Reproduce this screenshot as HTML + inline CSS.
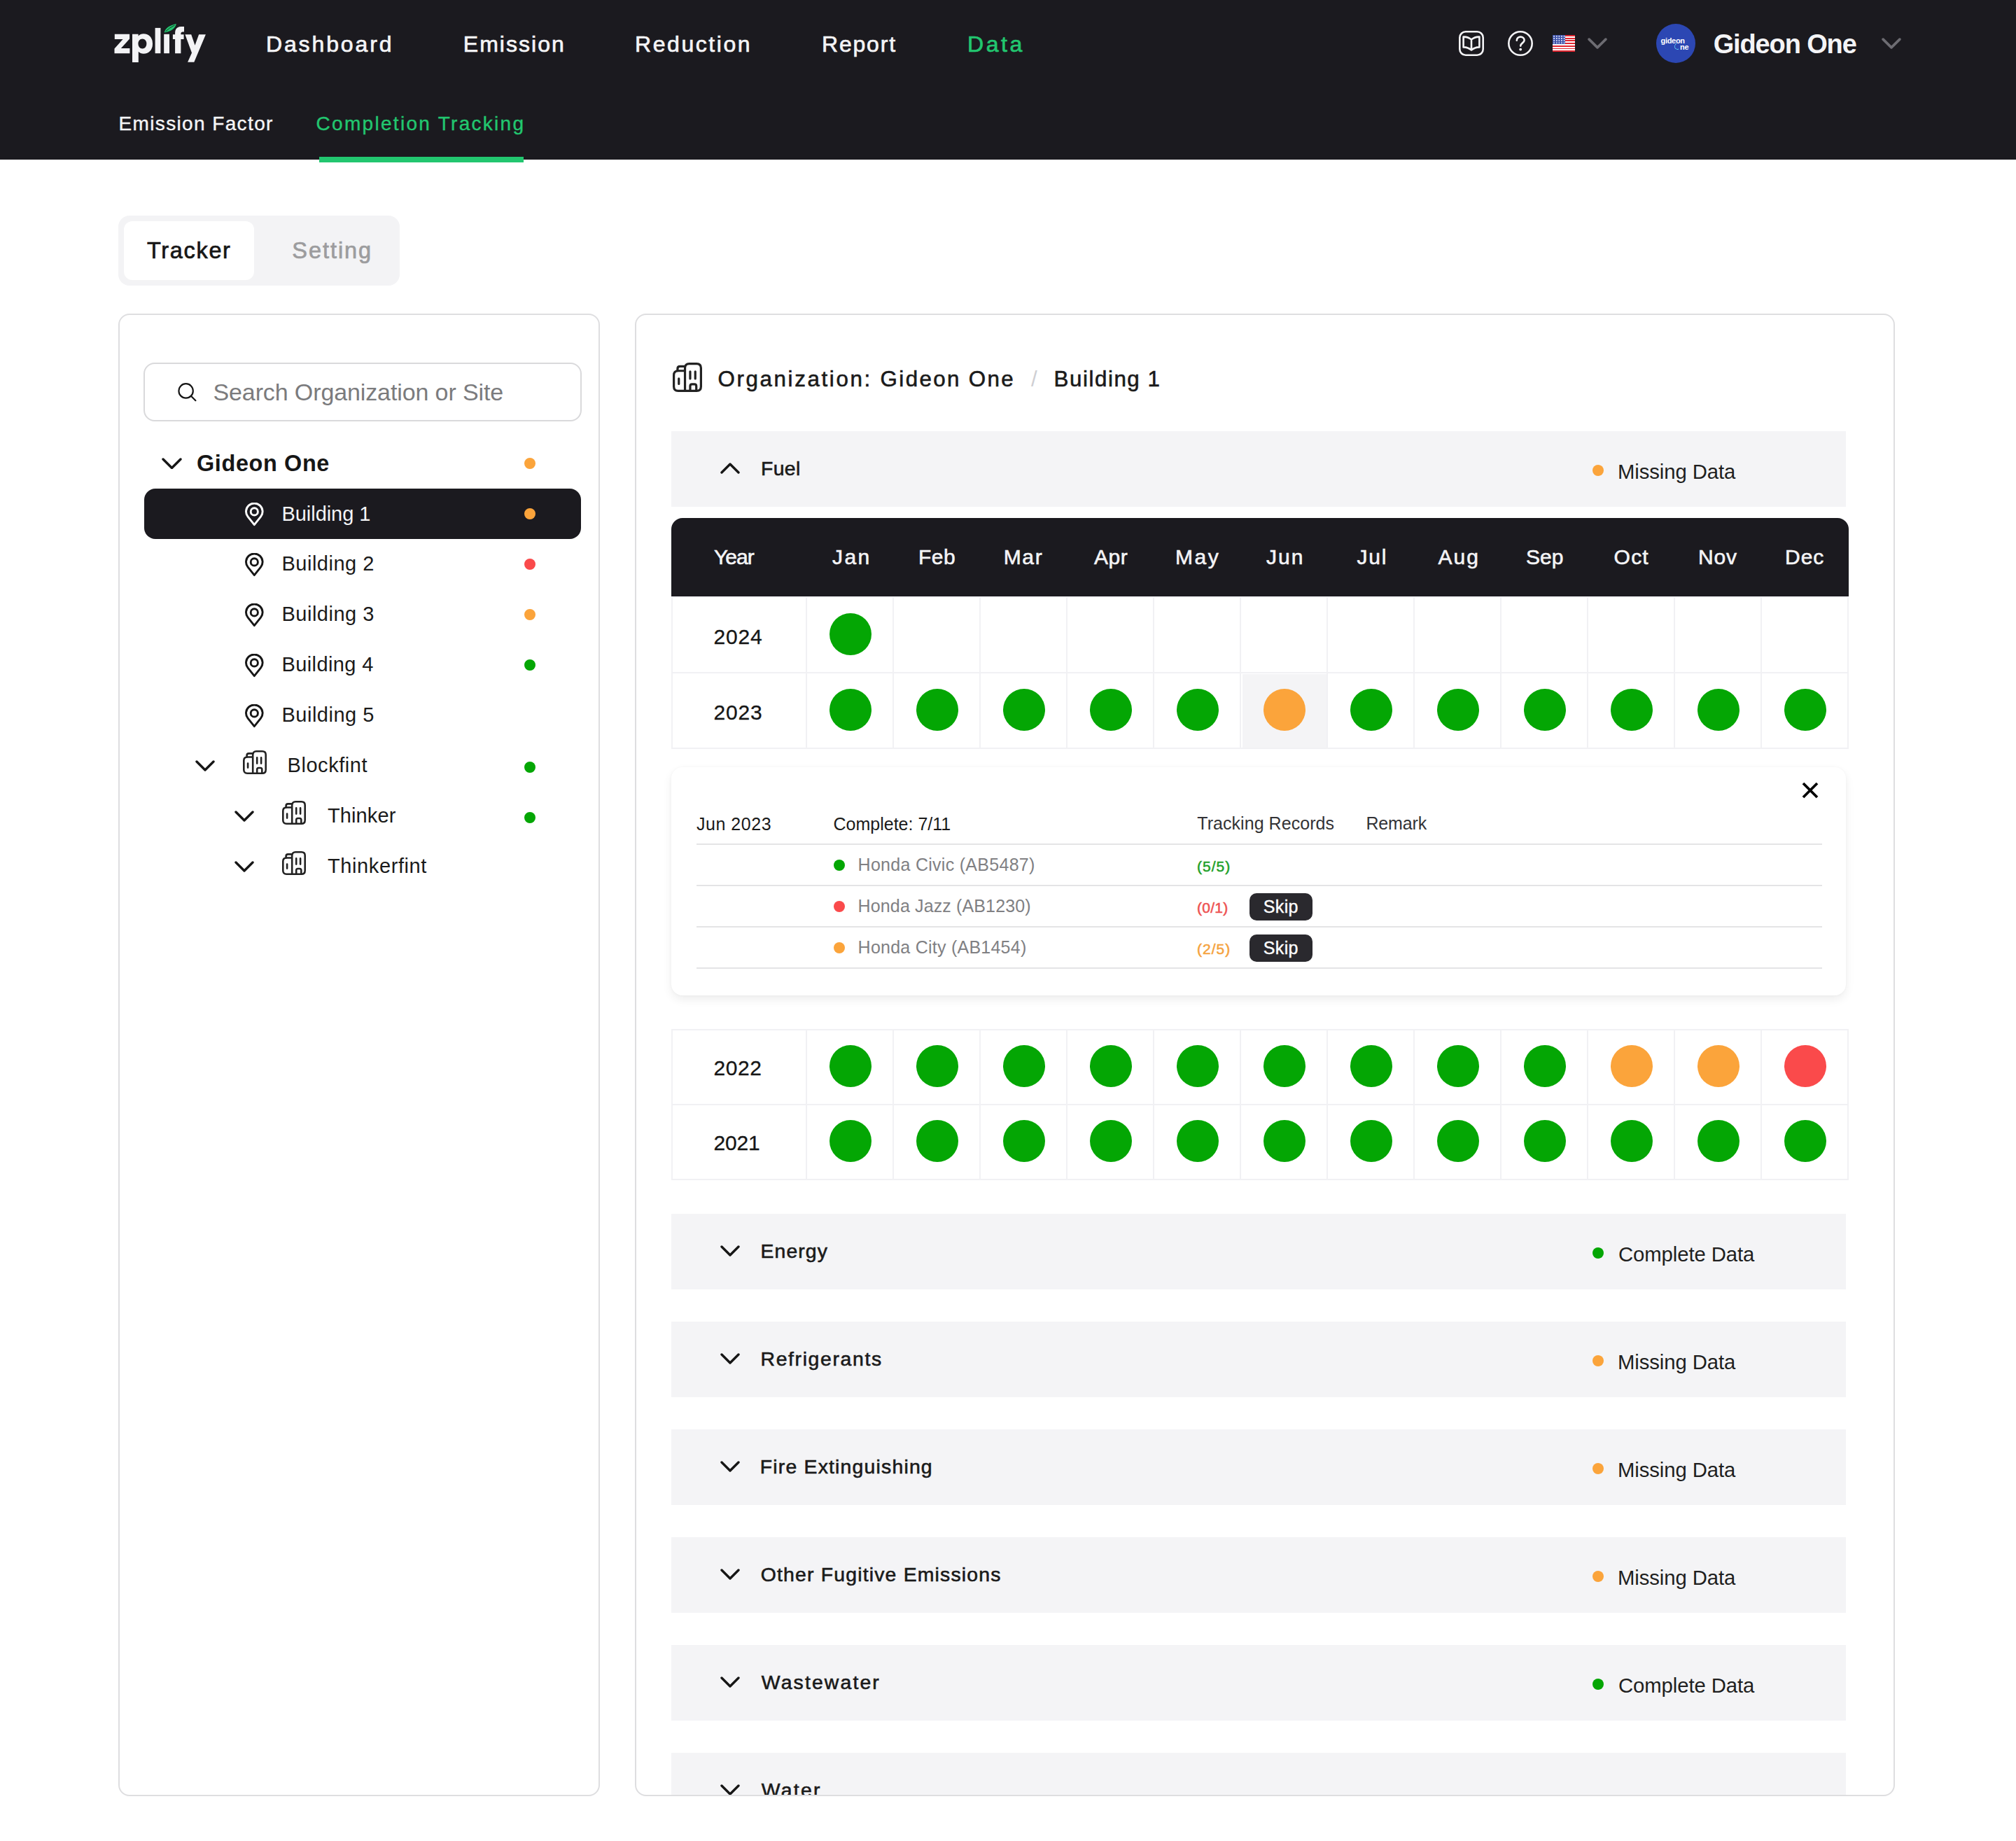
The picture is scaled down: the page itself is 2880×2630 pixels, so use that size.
<!DOCTYPE html><html><head><meta charset="utf-8"><title>zplify</title><style>
html,body{margin:0;padding:0;}body{width:2880px;height:2630px;position:relative;overflow:hidden;background:#ffffff;font-family:"Liberation Sans",sans-serif;}
.a{position:absolute;box-sizing:border-box;}.t{position:absolute;white-space:nowrap;line-height:1;font-family:"Liberation Sans",sans-serif;}
</style></head><body>
<div class="a" style="left:0px;top:0px;width:2880px;height:228px;background:#1b1a1f;border-radius:0px;"></div>
<svg class="a" style="left:160px;top:30px;" width="140" height="62" viewBox="0 0 140 62" fill="none"><g transform="translate(-160,-30)" fill="#f3f3f5"><path d="M163.8 48.8H185.1V55.6L172.9 69H185.4V76.2H163.5V69.5L175.6 56H163.8Z"/><path d="M189 48.8H197.6V51.5Q200.5 48.2 205 48.2Q211 48.2 214.6 52.2Q218 56.2 218 62.4Q218 68.8 214.5 72.8Q211 76.8 205 76.8Q200.6 76.8 197.8 73.8V89H189ZM203.4 55.6Q200.6 55.6 199 57.6Q197.4 59.6 197.4 62.5Q197.4 65.5 199 67.5Q200.6 69.5 203.4 69.5Q206.2 69.5 207.8 67.5Q209.4 65.5 209.4 62.5Q209.4 59.6 207.8 57.6Q206.2 55.6 203.4 55.6Z"/><rect x="221.6" y="39.9" width="7.8" height="36.3"/><rect x="234.2" y="48.8" width="7.8" height="27.4"/><path d="M250.1 76.2V56.1H246.9V49.2H250.1V47Q250.1 38.1 259 38.1H263V45.4H261Q258.4 45.4 258.4 48.2V49.2H262.6V56.1H258.4V76.2Z"/><path d="M264.4 49.2H273.2L278.5 64.8L284.1 49.2H293.9L277.3 88.8H268.1L274 75.6Z"/></g><g transform="translate(-160,-30)"><path d="M234.8 46.6Q236 37.5 251.8 33.9Q250 43.5 234.8 46.6Z" fill="#22c66f"/><path d="M236.5 45Q242 39.5 249.5 36" stroke="#1b1a1f" stroke-width="0.9" fill="none"/></g></svg>
<div class="t" style="left:379.9px;top:46.8px;font-size:32px;letter-spacing:2.888px;color:#f4f4f6;-webkit-text-stroke:0.7px #f4f4f6;">Dashboard</div>
<div class="t" style="left:661.8px;top:46.8px;font-size:32px;letter-spacing:2.029px;color:#f4f4f6;-webkit-text-stroke:0.7px #f4f4f6;">Emission</div>
<div class="t" style="left:907px;top:46.8px;font-size:32px;letter-spacing:2.562px;color:#f4f4f6;-webkit-text-stroke:0.7px #f4f4f6;">Reduction</div>
<div class="t" style="left:1174px;top:46.8px;font-size:32px;letter-spacing:1.8px;color:#f4f4f6;-webkit-text-stroke:0.7px #f4f4f6;">Report</div>
<div class="t" style="left:1382px;top:46.8px;font-size:32px;letter-spacing:3.567px;color:#22c66f;-webkit-text-stroke:0.7px #22c66f;">Data</div>
<svg class="a" style="left:2080px;top:40px;" width="44" height="44" viewBox="0 0 44 44" fill="none"><g transform="translate(-2080,-40)" stroke="#f4f4f6" stroke-width="2.6" fill="none" stroke-linejoin="round"><rect x="2085.3" y="45.3" width="33.4" height="33.4" rx="8.5"/><path d="M2102 56.5C2098.5 53.6 2094.5 52.4 2090.6 52.6V67.4C2094.5 67.3 2098.5 68.6 2102 71.6C2105.5 68.6 2109.5 67.3 2113.4 67.4V52.6C2109.5 52.4 2105.5 53.6 2102 56.5ZM2102 56.5V71.6"/></g></svg>
<svg class="a" style="left:2150px;top:40px;" width="44" height="44" viewBox="0 0 44 44" fill="none"><g transform="translate(-2150,-40)"><circle cx="2172" cy="62" r="16.7" stroke="#f4f4f6" stroke-width="2.6" fill="none"/><path d="M2166.8 57.8C2166.8 54.6 2169.2 52.6 2172.2 52.6C2175.2 52.6 2177.6 54.6 2177.6 57.5C2177.6 61.2 2172.2 61.6 2172.2 65.6" stroke="#f4f4f6" stroke-width="2.6" fill="none" stroke-linecap="round"/><circle cx="2172.2" cy="70.6" r="1.9" fill="#f4f4f6"/></g></svg>
<div class="a" style="left:2218px;top:50px;width:32px;height:24px;background:repeating-linear-gradient(180deg,#e0262f 0px,#e0262f 1.85px,#ffffff 1.85px,#ffffff 3.7px);"></div>
<div class="a" style="left:2218px;top:50px;width:18px;height:13px;background:#3a4fa6;"></div>
<div class="a" style="left:2218px;top:50px;width:18px;height:13px;background-image:radial-gradient(circle,#e8ecff 0.9px,transparent 1.1px);background-size:3.6px 3.2px;background-position:0.4px 0.2px;"></div>
<svg class="a" style="left:2268px;top:54px;" width="28" height="16" viewBox="0 0 28 16" fill="none"><polyline points="2.1,2.1 14.0,13.9 25.9,2.1" stroke="#6d6c72" stroke-width="3.6" stroke-linecap="round" stroke-linejoin="round"/></svg>
<div class="a" style="left:2366.0px;top:34.0px;width:56px;height:56px;background:#2c47b3;border-radius:28.0px;"></div>
<div class="t" style="left:2372.5px;top:53px;font-size:11px;font-weight:700;color:#fff;letter-spacing:-0.3px;">gideon</div>
<div class="t" style="left:2400px;top:61.5px;font-size:11px;font-weight:700;color:#fff;letter-spacing:-0.3px;">ne</div>
<div class="a" style="left:2392px;top:60.5px;width:9px;height:10px;border:1.7px solid #58c4ef;border-radius:50%;border-top-color:transparent;border-right-color:transparent;transform:rotate(20deg);"></div>
<div class="t" style="left:2447.7px;top:43.7px;font-size:38px;letter-spacing:-1.133px;color:#f4f4f6;font-weight:700;">Gideon One</div>
<svg class="a" style="left:2688px;top:54px;" width="28" height="16" viewBox="0 0 28 16" fill="none"><polyline points="2.1,2.1 14.0,13.9 25.9,2.1" stroke="#6d6c72" stroke-width="3.6" stroke-linecap="round" stroke-linejoin="round"/></svg>
<div class="t" style="left:169.4px;top:162.5px;font-size:28px;letter-spacing:1.379px;color:#f4f4f6;-webkit-text-stroke:0.4px #f4f4f6;">Emission Factor</div>
<div class="t" style="left:451.6px;top:162.5px;font-size:28px;letter-spacing:2.289px;color:#22c66f;-webkit-text-stroke:0.4px #22c66f;">Completion Tracking</div>
<div class="a" style="left:456px;top:224px;width:292px;height:8px;background:#22c66f;border-radius:0px;"></div>
<div class="a" style="left:169px;top:308px;width:402px;height:100px;background:#f3f3f5;border-radius:16px;"></div>
<div class="a" style="left:177px;top:316px;width:186px;height:84px;background:#ffffff;border-radius:12px;"></div>
<div class="t" style="left:210px;top:342.38px;font-size:32.5px;letter-spacing:1.667px;color:#161616;-webkit-text-stroke:0.7px #161616;">Tracker</div>
<div class="t" style="left:417.3px;top:342.38px;font-size:32.5px;letter-spacing:1.95px;color:#9c9c9e;-webkit-text-stroke:0.7px #9c9c9e;">Setting</div>
<div class="a" style="left:169px;top:448px;width:688px;height:2118px;background:#ffffff;border-radius:16px;border:2px solid #dedee0;"></div>
<div class="a" style="left:205px;top:518px;width:626px;height:84px;background:#ffffff;border-radius:16px;border:2px solid #d9d9db;"></div>
<svg class="a" style="left:250px;top:543px;" width="34" height="34" viewBox="0 0 34 34" fill="none"><g transform="translate(-250,-543)" stroke="#161616" stroke-width="2.2" fill="none" stroke-linecap="round"><circle cx="265.6" cy="558.4" r="10.2"/><path d="M273.2 566L279.4 572.2"/></g></svg>
<div class="t" style="left:304.5px;top:542.9px;font-size:34px;letter-spacing:-0.115px;color:#7b7b7d;">Search Organization or Site</div>
<svg class="a" style="left:230.5px;top:653.5px;" width="29" height="16.5" viewBox="0 0 29 16.5" fill="none"><polyline points="2.0,2.0 14.5,14.5 27.0,2.0" stroke="#161616" stroke-width="3.4" stroke-linecap="round" stroke-linejoin="round"/></svg>
<div class="t" style="left:281px;top:646.26px;font-size:32.4px;letter-spacing:0.644px;color:#161616;font-weight:700;">Gideon One</div>
<div class="a" style="left:749.0px;top:654.0px;width:16px;height:16px;background:#fba43b;border-radius:8.0px;"></div>
<div class="a" style="left:206px;top:698px;width:624px;height:72px;background:#1b1a1f;border-radius:16px;"></div>
<svg class="a" style="left:349.5px;top:717.5px;" width="27" height="34" viewBox="0 0 27 34" fill="none"><path d="M13.3 31.6L4.12 20.2A11.8 11.8 0 1 1 22.48 20.2Z" stroke="#ffffff" stroke-width="2.9" stroke-linejoin="round"/><circle cx="13.3" cy="12.9" r="5.1" stroke="#ffffff" stroke-width="2.9"/></svg>
<div class="t" style="left:402.5px;top:719.65px;font-size:29px;letter-spacing:-0.056px;color:#f4f4f6;">Building 1</div>
<svg class="a" style="left:349.5px;top:789.5px;" width="27" height="34" viewBox="0 0 27 34" fill="none"><path d="M13.3 31.6L4.12 20.2A11.8 11.8 0 1 1 22.48 20.2Z" stroke="#161616" stroke-width="2.9" stroke-linejoin="round"/><circle cx="13.3" cy="12.9" r="5.1" stroke="#161616" stroke-width="2.9"/></svg>
<div class="t" style="left:402.5px;top:791.35px;font-size:29px;letter-spacing:0.5px;color:#1a1a1a;">Building 2</div>
<svg class="a" style="left:349.5px;top:861.5px;" width="27" height="34" viewBox="0 0 27 34" fill="none"><path d="M13.3 31.6L4.12 20.2A11.8 11.8 0 1 1 22.48 20.2Z" stroke="#161616" stroke-width="2.9" stroke-linejoin="round"/><circle cx="13.3" cy="12.9" r="5.1" stroke="#161616" stroke-width="2.9"/></svg>
<div class="t" style="left:402.5px;top:863.35px;font-size:29px;letter-spacing:0.5px;color:#1a1a1a;">Building 3</div>
<svg class="a" style="left:349.5px;top:933.5px;" width="27" height="34" viewBox="0 0 27 34" fill="none"><path d="M13.3 31.6L4.12 20.2A11.8 11.8 0 1 1 22.48 20.2Z" stroke="#161616" stroke-width="2.9" stroke-linejoin="round"/><circle cx="13.3" cy="12.9" r="5.1" stroke="#161616" stroke-width="2.9"/></svg>
<div class="t" style="left:402.5px;top:935.35px;font-size:29px;letter-spacing:0.389px;color:#1a1a1a;">Building 4</div>
<svg class="a" style="left:349.5px;top:1005.5px;" width="27" height="34" viewBox="0 0 27 34" fill="none"><path d="M13.3 31.6L4.12 20.2A11.8 11.8 0 1 1 22.48 20.2Z" stroke="#161616" stroke-width="2.9" stroke-linejoin="round"/><circle cx="13.3" cy="12.9" r="5.1" stroke="#161616" stroke-width="2.9"/></svg>
<div class="t" style="left:402.5px;top:1007.35px;font-size:29px;letter-spacing:0.5px;color:#1a1a1a;">Building 5</div>
<div class="a" style="left:749.0px;top:726.0px;width:16px;height:16px;background:#fba43b;border-radius:8.0px;"></div>
<div class="a" style="left:749.0px;top:798.0px;width:16px;height:16px;background:#fa4a4b;border-radius:8.0px;"></div>
<div class="a" style="left:749.0px;top:870.0px;width:16px;height:16px;background:#fba43b;border-radius:8.0px;"></div>
<div class="a" style="left:749.0px;top:942.0px;width:16px;height:16px;background:#04a604;border-radius:8.0px;"></div>
<svg class="a" style="left:279px;top:1085.5px;" width="28" height="16" viewBox="0 0 28 16" fill="none"><polyline points="2.0,2.0 14.0,14.0 26.0,2.0" stroke="#161616" stroke-width="3.4" stroke-linecap="round" stroke-linejoin="round"/></svg>
<svg class="a" style="left:347px;top:1072px;" width="34" height="34" viewBox="0 0 34 34" fill="none"><g transform="scale(1.0)"><g stroke="#222" stroke-width="2.6" stroke-linecap="round" stroke-linejoin="round" fill="none"><path d="M14.2 32.7V6.3Q14.2 1.3 19.2 1.3H27.7Q32.7 1.3 32.7 6.3V27.7Q32.7 32.7 27.7 32.7H6.3Q1.3 32.7 1.3 27.7V14.5Q1.3 9.5 6.3 9.5H14.2"/><path d="M5.6 9.5V7.2Q5.6 4.4 8.4 4.4H14.2"/><path d="M7.1 18.6V24.6M20.2 10.4V18.6M26.1 10.4V18.6"/><path d="M20.2 32.7V27.2Q20.2 25 22.4 25H25.1Q27.3 25 27.3 27.2V32.7"/></g></g></svg>
<div class="t" style="left:410.5px;top:1079.35px;font-size:29px;letter-spacing:0.562px;color:#1a1a1a;">Blockfint</div>
<div class="a" style="left:749.0px;top:1088.0px;width:16px;height:16px;background:#04a604;border-radius:8.0px;"></div>
<svg class="a" style="left:335px;top:1158px;" width="28" height="16" viewBox="0 0 28 16" fill="none"><polyline points="2.0,2.0 14.0,14.0 26.0,2.0" stroke="#161616" stroke-width="3.4" stroke-linecap="round" stroke-linejoin="round"/></svg>
<svg class="a" style="left:403px;top:1144px;" width="34" height="34" viewBox="0 0 34 34" fill="none"><g transform="scale(1.0)"><g stroke="#222" stroke-width="2.6" stroke-linecap="round" stroke-linejoin="round" fill="none"><path d="M14.2 32.7V6.3Q14.2 1.3 19.2 1.3H27.7Q32.7 1.3 32.7 6.3V27.7Q32.7 32.7 27.7 32.7H6.3Q1.3 32.7 1.3 27.7V14.5Q1.3 9.5 6.3 9.5H14.2"/><path d="M5.6 9.5V7.2Q5.6 4.4 8.4 4.4H14.2"/><path d="M7.1 18.6V24.6M20.2 10.4V18.6M26.1 10.4V18.6"/><path d="M20.2 32.7V27.2Q20.2 25 22.4 25H25.1Q27.3 25 27.3 27.2V32.7"/></g></g></svg>
<div class="t" style="left:468px;top:1151.35px;font-size:29px;letter-spacing:0.1px;color:#1a1a1a;">Thinker</div>
<div class="a" style="left:749.0px;top:1160.0px;width:16px;height:16px;background:#04a604;border-radius:8.0px;"></div>
<svg class="a" style="left:335px;top:1230px;" width="28" height="16" viewBox="0 0 28 16" fill="none"><polyline points="2.0,2.0 14.0,14.0 26.0,2.0" stroke="#161616" stroke-width="3.4" stroke-linecap="round" stroke-linejoin="round"/></svg>
<svg class="a" style="left:403px;top:1216px;" width="34" height="34" viewBox="0 0 34 34" fill="none"><g transform="scale(1.0)"><g stroke="#222" stroke-width="2.6" stroke-linecap="round" stroke-linejoin="round" fill="none"><path d="M14.2 32.7V6.3Q14.2 1.3 19.2 1.3H27.7Q32.7 1.3 32.7 6.3V27.7Q32.7 32.7 27.7 32.7H6.3Q1.3 32.7 1.3 27.7V14.5Q1.3 9.5 6.3 9.5H14.2"/><path d="M5.6 9.5V7.2Q5.6 4.4 8.4 4.4H14.2"/><path d="M7.1 18.6V24.6M20.2 10.4V18.6M26.1 10.4V18.6"/><path d="M20.2 32.7V27.2Q20.2 25 22.4 25H25.1Q27.3 25 27.3 27.2V32.7"/></g></g></svg>
<div class="t" style="left:468px;top:1223.35px;font-size:29px;letter-spacing:0.6px;color:#1a1a1a;">Thinkerfint</div>
<div class="a" style="left:907px;top:448px;width:1800px;height:2118px;border:2px solid #dedee0;border-radius:16px;background:#ffffff;overflow:hidden;">
<div class="a" style="left:-909px;top:-450px;width:2880px;height:2630px;">
<svg class="a" style="left:961px;top:518px;" width="42" height="42" viewBox="0 0 42 42" fill="none"><g transform="scale(1.2352941176470589)"><g stroke="#222" stroke-width="2.6" stroke-linecap="round" stroke-linejoin="round" fill="none"><path d="M14.2 32.7V6.3Q14.2 1.3 19.2 1.3H27.7Q32.7 1.3 32.7 6.3V27.7Q32.7 32.7 27.7 32.7H6.3Q1.3 32.7 1.3 27.7V14.5Q1.3 9.5 6.3 9.5H14.2"/><path d="M5.6 9.5V7.2Q5.6 4.4 8.4 4.4H14.2"/><path d="M7.1 18.6V24.6M20.2 10.4V18.6M26.1 10.4V18.6"/><path d="M20.2 32.7V27.2Q20.2 25 22.4 25H25.1Q27.3 25 27.3 27.2V32.7"/></g></g></svg>
<div class="t" style="left:1025.5px;top:525.5px;font-size:31.3px;letter-spacing:2.625px;color:#1a1a1a;-webkit-text-stroke:0.6px #1a1a1a;">Organization:</div>
<div class="t" style="left:1257.6px;top:525.5px;font-size:31.3px;letter-spacing:2.378px;color:#1a1a1a;-webkit-text-stroke:0.6px #1a1a1a;">Gideon One</div>
<div class="t" style="left:1473px;top:525.5px;font-size:31.3px;letter-spacing:1.0px;color:#cfcfd3;">/</div>
<div class="t" style="left:1505.6px;top:525.5px;font-size:31.3px;letter-spacing:1.544px;color:#1a1a1a;-webkit-text-stroke:0.6px #1a1a1a;">Building 1</div>
<div class="a" style="left:959px;top:616px;width:1678px;height:108px;background:#f4f4f6;border-radius:0px;"></div>
<svg class="a" style="left:1029px;top:661px;" width="28" height="16" viewBox="0 0 28 16" fill="none"><polyline points="2.0,14.0 14.0,2.0 26.0,14.0" stroke="#161616" stroke-width="3.4" stroke-linecap="round" stroke-linejoin="round"/></svg>
<div class="t" style="left:1087px;top:654.86px;font-size:28.4px;letter-spacing:0.333px;color:#1a1a1a;-webkit-text-stroke:0.6px #1a1a1a;">Fuel</div>
<div class="a" style="left:2275.0px;top:664.0px;width:16px;height:16px;background:#fba43b;border-radius:8.0px;"></div>
<div class="t" style="left:2311px;top:659.1px;font-size:29.3px;letter-spacing:-0.091px;color:#1f1f1f;">Missing Data</div>
<div class="a" style="left:959px;top:740px;width:1682px;height:112px;background:#1b1a1f;border-radius:16px 16px 0 0px;"></div>
<div class="t" style="left:1020px;top:780.5px;font-size:30px;letter-spacing:-1.0px;color:#f4f4f6;-webkit-text-stroke:0.6px #f4f4f6;">Year</div>
<div class="t" style="left:1189px;top:780.5px;font-size:30px;letter-spacing:2.4px;color:#f4f4f6;-webkit-text-stroke:0.6px #f4f4f6;">Jan</div>
<div class="t" style="left:1312px;top:780.5px;font-size:30px;letter-spacing:0.5px;color:#f4f4f6;-webkit-text-stroke:0.6px #f4f4f6;">Feb</div>
<div class="t" style="left:1433.7px;top:780.5px;font-size:30px;letter-spacing:1.65px;color:#f4f4f6;-webkit-text-stroke:0.6px #f4f4f6;">Mar</div>
<div class="t" style="left:1563px;top:780.5px;font-size:30px;letter-spacing:0.5px;color:#f4f4f6;-webkit-text-stroke:0.6px #f4f4f6;">Apr</div>
<div class="t" style="left:1679px;top:780.5px;font-size:30px;letter-spacing:2.5px;color:#f4f4f6;-webkit-text-stroke:0.6px #f4f4f6;">May</div>
<div class="t" style="left:1809px;top:780.5px;font-size:30px;letter-spacing:2.0px;color:#f4f4f6;-webkit-text-stroke:0.6px #f4f4f6;">Jun</div>
<div class="t" style="left:1938.5px;top:780.5px;font-size:30px;letter-spacing:1.75px;color:#f4f4f6;-webkit-text-stroke:0.6px #f4f4f6;">Jul</div>
<div class="t" style="left:2054.6px;top:780.5px;font-size:30px;letter-spacing:2.0px;color:#f4f4f6;-webkit-text-stroke:0.6px #f4f4f6;">Aug</div>
<div class="t" style="left:2180px;top:780.5px;font-size:30px;letter-spacing:0.0px;color:#f4f4f6;-webkit-text-stroke:0.6px #f4f4f6;">Sep</div>
<div class="t" style="left:2305.6px;top:780.5px;font-size:30px;letter-spacing:1.2px;color:#f4f4f6;-webkit-text-stroke:0.6px #f4f4f6;">Oct</div>
<div class="t" style="left:2426px;top:780.5px;font-size:30px;letter-spacing:0.85px;color:#f4f4f6;-webkit-text-stroke:0.6px #f4f4f6;">Nov</div>
<div class="t" style="left:2550px;top:780.5px;font-size:30px;letter-spacing:1.0px;color:#f4f4f6;-webkit-text-stroke:0.6px #f4f4f6;">Dec</div>
<div class="a" style="left:1775px;top:963px;width:120px;height:105px;background:#f4f4f6;border-radius:0px;"></div>
<div class="a" style="left:959px;top:853px;width:2px;height:216px;background:#f1f1f4;border-radius:0px;"></div>
<div class="a" style="left:2639px;top:853px;width:2px;height:216px;background:#f1f1f4;border-radius:0px;"></div>
<div class="a" style="left:1151px;top:853px;width:2px;height:216px;background:#f1f1f4;border-radius:0px;"></div>
<div class="a" style="left:1275px;top:853px;width:2px;height:216px;background:#f1f1f4;border-radius:0px;"></div>
<div class="a" style="left:1399px;top:853px;width:2px;height:216px;background:#f1f1f4;border-radius:0px;"></div>
<div class="a" style="left:1523px;top:853px;width:2px;height:216px;background:#f1f1f4;border-radius:0px;"></div>
<div class="a" style="left:1647px;top:853px;width:2px;height:216px;background:#f1f1f4;border-radius:0px;"></div>
<div class="a" style="left:1771px;top:853px;width:2px;height:216px;background:#f1f1f4;border-radius:0px;"></div>
<div class="a" style="left:1895px;top:853px;width:2px;height:216px;background:#f1f1f4;border-radius:0px;"></div>
<div class="a" style="left:2019px;top:853px;width:2px;height:216px;background:#f1f1f4;border-radius:0px;"></div>
<div class="a" style="left:2143px;top:853px;width:2px;height:216px;background:#f1f1f4;border-radius:0px;"></div>
<div class="a" style="left:2267px;top:853px;width:2px;height:216px;background:#f1f1f4;border-radius:0px;"></div>
<div class="a" style="left:2391px;top:853px;width:2px;height:216px;background:#f1f1f4;border-radius:0px;"></div>
<div class="a" style="left:2515px;top:853px;width:2px;height:216px;background:#f1f1f4;border-radius:0px;"></div>
<div class="a" style="left:959px;top:852px;width:1682px;height:2px;background:#f1f1f4;border-radius:0px;"></div>
<div class="a" style="left:959px;top:960px;width:1682px;height:2px;background:#f1f1f4;border-radius:0px;"></div>
<div class="a" style="left:959px;top:1068px;width:1682px;height:2px;background:#f1f1f4;border-radius:0px;"></div>
<div class="t" style="left:1019.6px;top:894.8px;font-size:30px;letter-spacing:0.8px;color:#161616;-webkit-text-stroke:0.3px #161616;">2024</div>
<div class="a" style="left:1185.0px;top:876.0px;width:60px;height:60px;background:#04a604;border-radius:30.0px;"></div>
<div class="t" style="left:1019.6px;top:1003.0px;font-size:30px;letter-spacing:0.8px;color:#161616;-webkit-text-stroke:0.3px #161616;">2023</div>
<div class="a" style="left:1185.0px;top:984.0px;width:60px;height:60px;background:#04a604;border-radius:30.0px;"></div>
<div class="a" style="left:1309.0px;top:984.0px;width:60px;height:60px;background:#04a604;border-radius:30.0px;"></div>
<div class="a" style="left:1433.0px;top:984.0px;width:60px;height:60px;background:#04a604;border-radius:30.0px;"></div>
<div class="a" style="left:1557.0px;top:984.0px;width:60px;height:60px;background:#04a604;border-radius:30.0px;"></div>
<div class="a" style="left:1681.0px;top:984.0px;width:60px;height:60px;background:#04a604;border-radius:30.0px;"></div>
<div class="a" style="left:1805.0px;top:984.0px;width:60px;height:60px;background:#fba43b;border-radius:30.0px;"></div>
<div class="a" style="left:1929.0px;top:984.0px;width:60px;height:60px;background:#04a604;border-radius:30.0px;"></div>
<div class="a" style="left:2053.0px;top:984.0px;width:60px;height:60px;background:#04a604;border-radius:30.0px;"></div>
<div class="a" style="left:2177.0px;top:984.0px;width:60px;height:60px;background:#04a604;border-radius:30.0px;"></div>
<div class="a" style="left:2301.0px;top:984.0px;width:60px;height:60px;background:#04a604;border-radius:30.0px;"></div>
<div class="a" style="left:2425.0px;top:984.0px;width:60px;height:60px;background:#04a604;border-radius:30.0px;"></div>
<div class="a" style="left:2549.0px;top:984.0px;width:60px;height:60px;background:#04a604;border-radius:30.0px;"></div>
<div class="a" style="left:959px;top:1096px;width:1678px;height:326px;background:#ffffff;border-radius:16px;box-shadow:0 6px 14px rgba(0,0,0,0.07),0 0 4px rgba(0,0,0,0.03);"></div>
<svg class="a" style="left:2570px;top:1113px;" width="32" height="32" viewBox="0 0 32 32" fill="none"><path d="M6 6L26 26M26 6L6 26" stroke="#000" stroke-width="3.8"/></svg>
<div class="t" style="left:995px;top:1164.65px;font-size:25px;letter-spacing:0.529px;color:#1a1a1a;">Jun 2023</div>
<div class="t" style="left:1190.4px;top:1164.65px;font-size:25px;letter-spacing:0.015px;color:#1a1a1a;">Complete: 7/11</div>
<div class="t" style="left:1710.3px;top:1164.25px;font-size:25px;letter-spacing:0.047px;color:#333336;">Tracking Records</div>
<div class="t" style="left:1951.4px;top:1164.25px;font-size:25px;letter-spacing:-0.14px;color:#333336;">Remark</div>
<div class="a" style="left:995px;top:1205px;width:1608px;height:2px;background:#e4e4e6;border-radius:0px;"></div>
<div class="a" style="left:995px;top:1264px;width:1608px;height:2px;background:#e4e4e6;border-radius:0px;"></div>
<div class="a" style="left:995px;top:1323px;width:1608px;height:2px;background:#e4e4e6;border-radius:0px;"></div>
<div class="a" style="left:995px;top:1382px;width:1608px;height:2px;background:#e4e4e6;border-radius:0px;"></div>
<div class="a" style="left:1191.0px;top:1228.4px;width:16px;height:16px;background:#04a604;border-radius:8.0px;"></div>
<div class="a" style="left:1191.0px;top:1287.4px;width:16px;height:16px;background:#fa4a4b;border-radius:8.0px;"></div>
<div class="a" style="left:1191.0px;top:1346.4px;width:16px;height:16px;background:#fba43b;border-radius:8.0px;"></div>
<div class="t" style="left:1225.6px;top:1222.95px;font-size:25px;letter-spacing:0.284px;color:#808083;">Honda Civic (AB5487)</div>
<div class="t" style="left:1225.6px;top:1281.95px;font-size:25px;letter-spacing:0.133px;color:#808083;">Honda Jazz (AB1230)</div>
<div class="t" style="left:1225.6px;top:1340.95px;font-size:25px;letter-spacing:0.244px;color:#808083;">Honda City (AB1454)</div>
<div class="t" style="left:1710px;top:1226.75px;font-size:21px;letter-spacing:1.0px;color:#1fa12a;-webkit-text-stroke:0.55px #1fa12a;">(5/5)</div>
<div class="t" style="left:1710px;top:1285.75px;font-size:21px;letter-spacing:0.25px;color:#ee5353;-webkit-text-stroke:0.55px #ee5353;">(0/1)</div>
<div class="t" style="left:1710px;top:1344.75px;font-size:21px;letter-spacing:1.0px;color:#f5a33f;-webkit-text-stroke:0.55px #f5a33f;">(2/5)</div>
<div class="a" style="left:1785px;top:1275.5px;width:90px;height:39.5px;background:#2a292e;border-radius:10px;"></div>
<div class="a" style="left:1785px;top:1334.5px;width:90px;height:39.5px;background:#2a292e;border-radius:10px;"></div>
<div class="t" style="left:1804.7px;top:1282.65px;font-size:25px;letter-spacing:0.4px;color:#ffffff;-webkit-text-stroke:0.4px #ffffff;">Skip</div>
<div class="t" style="left:1804.7px;top:1341.65px;font-size:25px;letter-spacing:0.4px;color:#ffffff;-webkit-text-stroke:0.4px #ffffff;">Skip</div>
<div class="a" style="left:959px;top:1470.5px;width:2px;height:214px;background:#f1f1f4;border-radius:0px;"></div>
<div class="a" style="left:2639px;top:1470.5px;width:2px;height:214px;background:#f1f1f4;border-radius:0px;"></div>
<div class="a" style="left:1151px;top:1470.5px;width:2px;height:214px;background:#f1f1f4;border-radius:0px;"></div>
<div class="a" style="left:1275px;top:1470.5px;width:2px;height:214px;background:#f1f1f4;border-radius:0px;"></div>
<div class="a" style="left:1399px;top:1470.5px;width:2px;height:214px;background:#f1f1f4;border-radius:0px;"></div>
<div class="a" style="left:1523px;top:1470.5px;width:2px;height:214px;background:#f1f1f4;border-radius:0px;"></div>
<div class="a" style="left:1647px;top:1470.5px;width:2px;height:214px;background:#f1f1f4;border-radius:0px;"></div>
<div class="a" style="left:1771px;top:1470.5px;width:2px;height:214px;background:#f1f1f4;border-radius:0px;"></div>
<div class="a" style="left:1895px;top:1470.5px;width:2px;height:214px;background:#f1f1f4;border-radius:0px;"></div>
<div class="a" style="left:2019px;top:1470.5px;width:2px;height:214px;background:#f1f1f4;border-radius:0px;"></div>
<div class="a" style="left:2143px;top:1470.5px;width:2px;height:214px;background:#f1f1f4;border-radius:0px;"></div>
<div class="a" style="left:2267px;top:1470.5px;width:2px;height:214px;background:#f1f1f4;border-radius:0px;"></div>
<div class="a" style="left:2391px;top:1470.5px;width:2px;height:214px;background:#f1f1f4;border-radius:0px;"></div>
<div class="a" style="left:2515px;top:1470.5px;width:2px;height:214px;background:#f1f1f4;border-radius:0px;"></div>
<div class="a" style="left:959px;top:1469.5px;width:1682px;height:2px;background:#f1f1f4;border-radius:0px;"></div>
<div class="a" style="left:959px;top:1576.5px;width:1682px;height:2px;background:#f1f1f4;border-radius:0px;"></div>
<div class="a" style="left:959px;top:1683.5px;width:1682px;height:2px;background:#f1f1f4;border-radius:0px;"></div>
<div class="t" style="left:1019.4px;top:1510.9px;font-size:30px;letter-spacing:0.6px;color:#161616;-webkit-text-stroke:0.3px #161616;">2022</div>
<div class="a" style="left:1185.0px;top:1493.0px;width:60px;height:60px;background:#04a604;border-radius:30.0px;"></div>
<div class="a" style="left:1309.0px;top:1493.0px;width:60px;height:60px;background:#04a604;border-radius:30.0px;"></div>
<div class="a" style="left:1433.0px;top:1493.0px;width:60px;height:60px;background:#04a604;border-radius:30.0px;"></div>
<div class="a" style="left:1557.0px;top:1493.0px;width:60px;height:60px;background:#04a604;border-radius:30.0px;"></div>
<div class="a" style="left:1681.0px;top:1493.0px;width:60px;height:60px;background:#04a604;border-radius:30.0px;"></div>
<div class="a" style="left:1805.0px;top:1493.0px;width:60px;height:60px;background:#04a604;border-radius:30.0px;"></div>
<div class="a" style="left:1929.0px;top:1493.0px;width:60px;height:60px;background:#04a604;border-radius:30.0px;"></div>
<div class="a" style="left:2053.0px;top:1493.0px;width:60px;height:60px;background:#04a604;border-radius:30.0px;"></div>
<div class="a" style="left:2177.0px;top:1493.0px;width:60px;height:60px;background:#04a604;border-radius:30.0px;"></div>
<div class="a" style="left:2301.0px;top:1493.0px;width:60px;height:60px;background:#fba43b;border-radius:30.0px;"></div>
<div class="a" style="left:2425.0px;top:1493.0px;width:60px;height:60px;background:#fba43b;border-radius:30.0px;"></div>
<div class="a" style="left:2549.0px;top:1493.0px;width:60px;height:60px;background:#fa4a4b;border-radius:30.0px;"></div>
<div class="t" style="left:1019.4px;top:1617.9px;font-size:30px;letter-spacing:-0.133px;color:#161616;-webkit-text-stroke:0.3px #161616;">2021</div>
<div class="a" style="left:1185.0px;top:1600.0px;width:60px;height:60px;background:#04a604;border-radius:30.0px;"></div>
<div class="a" style="left:1309.0px;top:1600.0px;width:60px;height:60px;background:#04a604;border-radius:30.0px;"></div>
<div class="a" style="left:1433.0px;top:1600.0px;width:60px;height:60px;background:#04a604;border-radius:30.0px;"></div>
<div class="a" style="left:1557.0px;top:1600.0px;width:60px;height:60px;background:#04a604;border-radius:30.0px;"></div>
<div class="a" style="left:1681.0px;top:1600.0px;width:60px;height:60px;background:#04a604;border-radius:30.0px;"></div>
<div class="a" style="left:1805.0px;top:1600.0px;width:60px;height:60px;background:#04a604;border-radius:30.0px;"></div>
<div class="a" style="left:1929.0px;top:1600.0px;width:60px;height:60px;background:#04a604;border-radius:30.0px;"></div>
<div class="a" style="left:2053.0px;top:1600.0px;width:60px;height:60px;background:#04a604;border-radius:30.0px;"></div>
<div class="a" style="left:2177.0px;top:1600.0px;width:60px;height:60px;background:#04a604;border-radius:30.0px;"></div>
<div class="a" style="left:2301.0px;top:1600.0px;width:60px;height:60px;background:#04a604;border-radius:30.0px;"></div>
<div class="a" style="left:2425.0px;top:1600.0px;width:60px;height:60px;background:#04a604;border-radius:30.0px;"></div>
<div class="a" style="left:2549.0px;top:1600.0px;width:60px;height:60px;background:#04a604;border-radius:30.0px;"></div>
<div class="a" style="left:959px;top:1734px;width:1678px;height:108px;background:#f4f4f6;border-radius:0px;"></div>
<svg class="a" style="left:1029px;top:1779px;" width="28" height="16" viewBox="0 0 28 16" fill="none"><polyline points="2.0,2.0 14.0,14.0 26.0,2.0" stroke="#161616" stroke-width="3.4" stroke-linecap="round" stroke-linejoin="round"/></svg>
<div class="t" style="left:1086.5px;top:1772.86px;font-size:28.4px;letter-spacing:1.1px;color:#1a1a1a;-webkit-text-stroke:0.6px #1a1a1a;">Energy</div>
<div class="a" style="left:2275.0px;top:1782.0px;width:16px;height:16px;background:#04a604;border-radius:8.0px;"></div>
<div class="t" style="left:2312px;top:1777.1px;font-size:29.3px;letter-spacing:-0.083px;color:#1f1f1f;">Complete Data</div>
<div class="a" style="left:959px;top:1888px;width:1678px;height:108px;background:#f4f4f6;border-radius:0px;"></div>
<svg class="a" style="left:1029px;top:1933px;" width="28" height="16" viewBox="0 0 28 16" fill="none"><polyline points="2.0,2.0 14.0,14.0 26.0,2.0" stroke="#161616" stroke-width="3.4" stroke-linecap="round" stroke-linejoin="round"/></svg>
<div class="t" style="left:1086.5px;top:1926.86px;font-size:28.4px;letter-spacing:1.636px;color:#1a1a1a;-webkit-text-stroke:0.6px #1a1a1a;">Refrigerants</div>
<div class="a" style="left:2275.0px;top:1936.0px;width:16px;height:16px;background:#fba43b;border-radius:8.0px;"></div>
<div class="t" style="left:2311px;top:1931.1px;font-size:29.3px;letter-spacing:-0.091px;color:#1f1f1f;">Missing Data</div>
<div class="a" style="left:959px;top:2042px;width:1678px;height:108px;background:#f4f4f6;border-radius:0px;"></div>
<svg class="a" style="left:1029px;top:2087px;" width="28" height="16" viewBox="0 0 28 16" fill="none"><polyline points="2.0,2.0 14.0,14.0 26.0,2.0" stroke="#161616" stroke-width="3.4" stroke-linecap="round" stroke-linejoin="round"/></svg>
<div class="t" style="left:1085.8px;top:2080.86px;font-size:28.4px;letter-spacing:1.188px;color:#1a1a1a;-webkit-text-stroke:0.6px #1a1a1a;">Fire Extinguishing</div>
<div class="a" style="left:2275.0px;top:2090.0px;width:16px;height:16px;background:#fba43b;border-radius:8.0px;"></div>
<div class="t" style="left:2311px;top:2085.09px;font-size:29.3px;letter-spacing:-0.091px;color:#1f1f1f;">Missing Data</div>
<div class="a" style="left:959px;top:2196px;width:1678px;height:108px;background:#f4f4f6;border-radius:0px;"></div>
<svg class="a" style="left:1029px;top:2241px;" width="28" height="16" viewBox="0 0 28 16" fill="none"><polyline points="2.0,2.0 14.0,14.0 26.0,2.0" stroke="#161616" stroke-width="3.4" stroke-linecap="round" stroke-linejoin="round"/></svg>
<div class="t" style="left:1086.8px;top:2234.86px;font-size:28.4px;letter-spacing:1.178px;color:#1a1a1a;-webkit-text-stroke:0.6px #1a1a1a;">Other Fugitive Emissions</div>
<div class="a" style="left:2275.0px;top:2244.0px;width:16px;height:16px;background:#fba43b;border-radius:8.0px;"></div>
<div class="t" style="left:2311px;top:2239.09px;font-size:29.3px;letter-spacing:-0.091px;color:#1f1f1f;">Missing Data</div>
<div class="a" style="left:959px;top:2350px;width:1678px;height:108px;background:#f4f4f6;border-radius:0px;"></div>
<svg class="a" style="left:1029px;top:2395px;" width="28" height="16" viewBox="0 0 28 16" fill="none"><polyline points="2.0,2.0 14.0,14.0 26.0,2.0" stroke="#161616" stroke-width="3.4" stroke-linecap="round" stroke-linejoin="round"/></svg>
<div class="t" style="left:1087.8px;top:2388.86px;font-size:28.4px;letter-spacing:2.133px;color:#1a1a1a;-webkit-text-stroke:0.6px #1a1a1a;">Wastewater</div>
<div class="a" style="left:2275.0px;top:2398.0px;width:16px;height:16px;background:#04a604;border-radius:8.0px;"></div>
<div class="t" style="left:2312px;top:2393.09px;font-size:29.3px;letter-spacing:-0.083px;color:#1f1f1f;">Complete Data</div>
<div class="a" style="left:959px;top:2504px;width:1678px;height:108px;background:#f4f4f6;border-radius:0px;"></div>
<svg class="a" style="left:1029px;top:2549px;" width="28" height="16" viewBox="0 0 28 16" fill="none"><polyline points="2.0,2.0 14.0,14.0 26.0,2.0" stroke="#161616" stroke-width="3.4" stroke-linecap="round" stroke-linejoin="round"/></svg>
<div class="t" style="left:1087.8px;top:2542.86px;font-size:28.4px;letter-spacing:2.25px;color:#1a1a1a;-webkit-text-stroke:0.6px #1a1a1a;">Water</div>
</div></div>
</body></html>
